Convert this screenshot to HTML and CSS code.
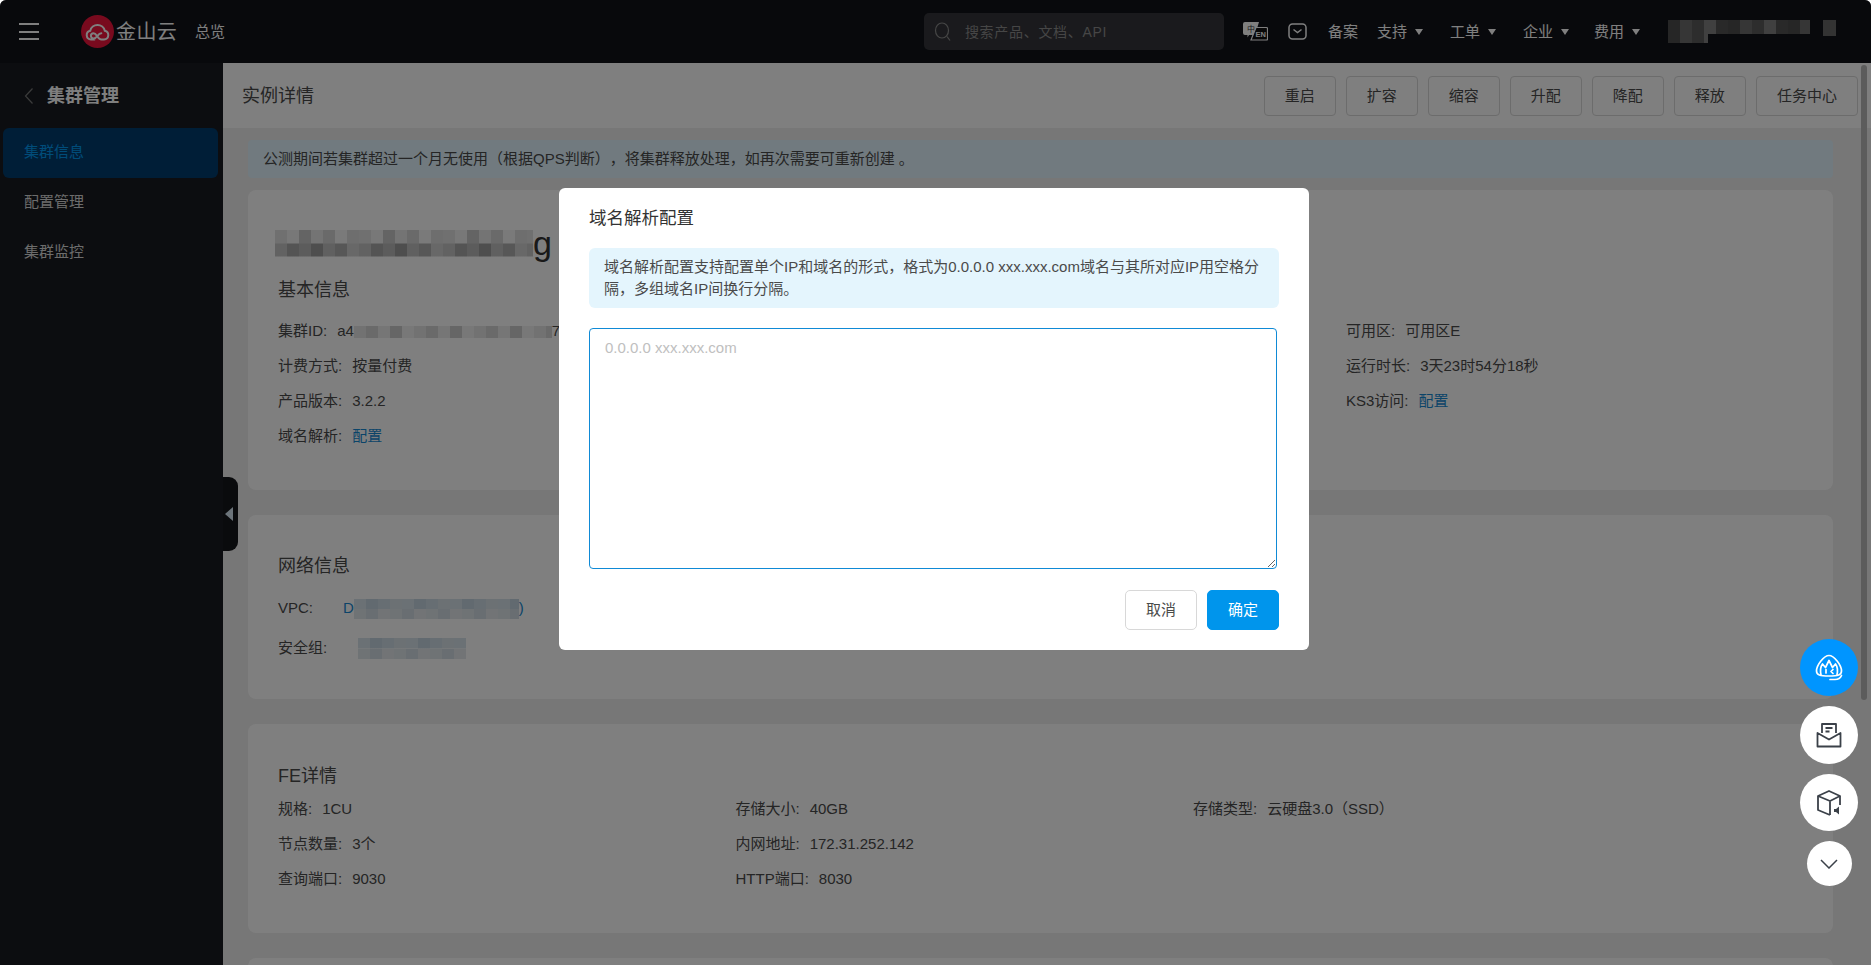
FILE: index.html
```html
<!DOCTYPE html>
<html lang="zh-CN">
<head>
<meta charset="utf-8">
<title>实例详情</title>
<link rel="stylesheet" href="styles.css">
</head>
<body>
<div class="app">
  <header class="topbar">
    <div class="hamburger"><i></i><i></i><i></i></div>
    <svg class="logo-mark" viewBox="0 0 33 33">
      <circle cx="16.5" cy="16.5" r="16.5" fill="#f0143c"/>
      <path d="M13.5 24.5H10a4.4 4.4 0 0 1-.8-8.7a7.5 7.5 0 0 1 14.6 0a4.4 4.4 0 0 1-.8 8.7h-2.5c-2 0-3.2-1.500-4.500-3.500c-1-1.600-2-2.800-3.500-2.800a2.600 2.600 0 0 0 0 5.200c1.800 0 3-1.300 4-2.600c1.300-1.700 2.400-2.600 3.800-2.600" fill="none" stroke="#fff" stroke-width="2" stroke-linecap="round"/>
    </svg>
    <span class="logo-text">金山云</span>
    <span class="overview">总览</span>
    <div class="search">
      <svg class="search-icon" viewBox="0 0 18 20"><ellipse cx="8" cy="8.500" rx="6.500" ry="7.500" fill="none" stroke="#8c8c8c" stroke-width="1.200"/><path d="M13 14.500l3 4" stroke="#8c8c8c" stroke-width="1.200"/></svg>
      <span>搜索产品、文档、API</span>
    </div>
    <svg class="lang-icon" viewBox="0 0 25 19">
      <path d="M2 0h14l-4 13H6l-1.500 2.500V13H2a2 2 0 0 1-2-2V2a2 2 0 0 1 2-2z" fill="#fff"/>
      <text x="4" y="10" class="lang-zh">中</text>
      <path d="M13 5.500h10.500a1 1 0 0 1 1 1V17a1 1 0 0 1-1 1H8z" fill="#111" stroke="#fff" stroke-width="1.200"/>
      <text x="12.500" y="15" class="lang-en">EN</text>
    </svg>
    <svg class="msg-icon" viewBox="0 0 19 17"><rect x="1" y="1" width="17" height="15" rx="3.500" fill="none" stroke="#fff" stroke-width="1.500"/><path d="M5.500 6.500l4 3 4-3" fill="none" stroke="#fff" stroke-width="1.500"/></svg>
    <span class="nav-plain">备案</span>
    <span class="nav-item first">支持<i class="caret"></i></span>
    <span class="nav-item tight">工单<i class="caret"></i></span>
    <span class="nav-item wide">企业<i class="caret"></i></span>
    <span class="nav-item">费用<i class="caret"></i></span>
    <div class="user"><span class="user-name"></span><span class="user-tail"></span></div>
  </header>

  <div class="body-row">
    <aside class="sidebar">
      <div class="side-head">
        <svg class="side-back" viewBox="0 0 10 18"><path d="M8.500 1.500L1.500 9l7 7.500" fill="none" stroke="#777" stroke-width="1.200"/></svg>
        <span>集群管理</span>
      </div>
      <nav class="side-nav">
        <a class="side-link active">集群信息</a>
        <a class="side-link">配置管理</a>
        <a class="side-link">集群监控</a>
      </nav>
      <div class="side-toggle"><i></i></div>
    </aside>

    <main class="main">
      <div class="subhead">
        <h1>实例详情</h1>
        <div class="actions">
          <button class="act">重启</button>
          <button class="act">扩容</button>
          <button class="act">缩容</button>
          <button class="act">升配</button>
          <button class="act">降配</button>
          <button class="act">释放</button>
          <button class="act wide">任务中心</button>
        </div>
      </div>

      <div class="content">
        <div class="notice">公测期间若集群超过一个月无使用（根据QPS判断），将集群释放处理，如再次需要可重新创建 。</div>

        <section class="card card-basic">
          <div class="cluster-name"><span class="mosaic mosaic-title"></span><span class="name-tail">g</span></div>
          <h2>基本信息</h2>
          <div class="grid-basic">
            <div class="row"><b>集群ID:</b><span>a4<span class="mosaic mosaic-id"></span>78</span></div>
            <div class="row"><b>可用区:</b><span>可用区E</span></div>
            <div class="row"><b>计费方式:</b><span>按量付费</span></div>
            <div class="row"><b>运行时长:</b><span>3天23时54分18秒</span></div>
            <div class="row"><b>产品版本:</b><span>3.2.2</span></div>
            <div class="row"><b>KS3访问:</b><a class="link">配置</a></div>
            <div class="row"><b>域名解析:</b><a class="link">配置</a></div>
          </div>
        </section>

        <section class="card card-net">
          <h2>网络信息</h2>
          <div class="net-row net-vpc"><b>VPC:</b><a class="link">D<span class="mosaic mosaic-blue mosaic-vpc"></span>)</a></div>
          <div class="net-row net-sg"><b>安全组:</b><a class="link"><span class="mosaic mosaic-blue mosaic-sg"></span></a></div>
        </section>

        <section class="card card-fe">
          <h2>FE详情</h2>
          <div class="grid-fe">
            <div class="row"><b>规格:</b><span>1CU</span></div>
            <div class="row"><b>存储大小:</b><span>40GB</span></div>
            <div class="row"><b>存储类型:</b><span>云硬盘3.0（SSD）</span></div>
            <div class="row"><b>节点数量:</b><span>3个</span></div>
            <div class="row"><b>内网地址:</b><span>172.31.252.142</span></div>
            <div class="row"></div>
            <div class="row"><b>查询端口:</b><span>9030</span></div>
            <div class="row"><b>HTTP端口:</b><span>8030</span></div>
          </div>
        </section>

        <section class="card card-next"></section>
      </div>
    </main>
  </div>

  <div class="scroll-thumb"></div>

  <div class="overlay">
    <div class="modal">
      <div class="modal-title">域名解析配置</div>
      <div class="modal-alert">域名解析配置支持配置单个IP和域名的形式，格式为0.0.0.0 xxx.xxx.com域名与其所对应IP用空格分隔，多组域名IP间换行分隔。</div>
      <textarea class="modal-input" placeholder="0.0.0.0 xxx.xxx.com"></textarea>
      <div class="modal-foot">
        <button class="btn">取消</button>
        <button class="btn primary">确定</button>
      </div>
    </div>
  </div>

  <div class="float-tools">
    <button class="tool blue">
      <svg viewBox="0 0 28 28" width="28" height="28" fill="none" stroke="#fff" stroke-width="1.700" stroke-linecap="round" stroke-linejoin="round">
        <path d="M1.500 17C1.500 11 9 1.500 14 1.500S26.500 11 26.500 17c0 4-3.500 5-12.500 5S1.500 21 1.500 17z"/>
        <path d="M6 21c-1-5 0-9 1.500-11l3 3.500L14 6.500l3.500 7 3-3.500c1.500 2 2.500 6 1.500 11"/>
        <path d="M11 15.500v3.500M18 15.500l-2 2 2 2"/>
        <path d="M15 25.500h5c3 0 5.500-1.500 6.500-4"/>
      </svg>
    </button>
    <button class="tool">
      <svg viewBox="0 0 26 26" width="26" height="26" fill="none" stroke="#3b4149" stroke-width="1.800" stroke-linejoin="round">
        <path d="M6 11V2h14v9"/>
        <path d="M9.500 6h7M9.500 9.500h4"/>
        <path d="M1.500 11L13 17.500 24.500 11v13.500h-23z"/>
      </svg>
    </button>
    <button class="tool mid">
      <svg viewBox="0 0 26 28" width="26" height="28" fill="none" stroke="#3b4149" stroke-width="1.800" stroke-linejoin="round">
        <path d="M14 26L2 21V7l11-5 11 5v9"/>
        <path d="M2 7l12 5 10-5M14 12v14"/>
        <path d="M18 20h2l3-2.500v8L20 23h-2z" fill="#3b4149" stroke="none"/>
      </svg>
    </button>
    <button class="tool small">
      <svg viewBox="0 0 18 10" width="18" height="10" fill="none" stroke="#3b4149" stroke-width="1.500"><path d="M1 1l8 8 8-8"/></svg>
    </button>
  </div>
</div>
</body>
</html>
```

FILE: styles.css
```css
* { box-sizing: border-box; }
html, body { margin: 0; height: 100%; background: #fff; overflow: hidden; }
body { font: 15px/22px "Liberation Sans", "Noto Sans CJK SC", sans-serif; color: #4a4a4a; }
h1, h2 { margin: 0; font-weight: 400; }
button { font: inherit; cursor: pointer; }

.app {
  position: relative;
  width: 1871px;
  height: 965px;
  overflow: hidden;
  border-radius: 6px 6px 0 0;
  background: #eee;
}

/* top bar */
.topbar {
  display: flex;
  align-items: center;
  height: 63px;
  padding: 0 35px 0 19px;
  background: #101218;
  color: #fff;
}
.hamburger { display: flex; flex-direction: column; justify-content: space-between; width: 20px; height: 17px; }
.hamburger i { display: block; height: 2px; background: #fff; }
.logo-mark { width: 33px; height: 33px; margin-left: 42px; flex: none; }
.logo-text { margin-left: 2px; width: 61px; font-size: 20px; letter-spacing: .4px; white-space: nowrap; }
.overview { margin-left: 18px; }
.search {
  display: flex;
  align-items: center;
  gap: 13px;
  width: 300px;
  height: 37px;
  margin-left: auto;
  padding-left: 10px;
  border-radius: 5px;
  background: #34353a;
  color: #8c8c8c;
  font-size: 14px;
  letter-spacing: .7px;
}
.search-icon { width: 18px; height: 20px; flex: none; }
.lang-icon { width: 25px; height: 19px; margin-left: 19px; flex: none; }
.lang-zh { font-size: 8px; fill: #333; }
.lang-en { font-size: 7.500px; fill: #fff; font-weight: 700; }
.msg-icon { width: 19px; height: 17px; margin-left: 20px; flex: none; }
.nav-plain { margin-left: 21px; }
.nav-item { display: flex; align-items: center; margin-left: 25px; }
.nav-item.first { margin-left: 19px; }
.nav-item.tight { margin-left: 27px; }
.nav-item.wide { margin-left: 27px; }
.caret {
  width: 0;
  height: 0;
  margin-left: 8px;
  border-left: 4.500px solid transparent;
  border-right: 4.500px solid transparent;
  border-top: 6px solid #fff;
}
.user { display: flex; align-items: flex-start; gap: 13px; margin-left: 28px; height: 23px; }
.user-name {
  width: 142px;
  height: 23px;
  background:
    linear-gradient(#101218, #101218) 40px 100% / 100% 9px no-repeat,
    repeating-linear-gradient(90deg, #4c4c4c 0 12px, #6c6c6c 12px 24px, #5a5a5a 24px 36px, #808080 36px 48px, #525252 48px 60px);
}
.user-tail { width: 13px; height: 16px; background: #666; }

/* body */
.body-row { display: flex; height: 902px; }
.sidebar { position: relative; flex: none; width: 223px; background: #191b20; color: #d8d8d8; }
.side-head { display: flex; align-items: center; height: 65px; padding-left: 24px; font-size: 18px; font-weight: 700; color: #fff; }
.side-back { width: 10px; height: 18px; margin-right: 13px; }
.side-nav { display: flex; flex-direction: column; padding: 0 5px 0 3px; }
.side-link { display: flex; align-items: center; height: 50px; padding: 0 0 2px 21px; border-radius: 6px; }
.side-link.active { background: #003c6e; color: #0099f2; }
.side-toggle {
  position: absolute;
  left: 223px;
  top: 414px;
  display: flex;
  align-items: center;
  width: 15px;
  height: 74px;
  border-radius: 0 9px 9px 0;
  background: #15161a;
}
.side-toggle i {
  margin-left: 2px;
  border-top: 7px solid transparent;
  border-bottom: 7px solid transparent;
  border-right: 8px solid #d8e8f5;
}

.main { flex: 1; min-width: 0; }
.subhead {
  display: flex;
  align-items: center;
  justify-content: space-between;
  height: 65px;
  padding: 0 13px 0 19px;
  background: #fefefe;
}
.subhead h1 { font-size: 18px; color: #4a4a4a; }
.actions { display: flex; gap: 10.500px; }
.act {
  width: 71.500px;
  height: 40px;
  padding: 0;
  border: 1px solid #d8d8d8;
  border-radius: 4px;
  background: transparent;
  color: #4a4a4a;
}
.act.wide { width: 102px; }

.content { display: flex; flex-direction: column; padding: 12px 38px 0 25px; }
.notice {
  height: 38px;
  padding: 8px 15px;
  border-radius: 4px;
  background: #e2f5ff;
  text-spacing-trim: space-all;
}
.card { margin-top: 25px; padding: 0 30px; border-radius: 8px; background: #fff; }
.notice + .card { margin-top: 12px; }
.card h2 { font-size: 18px; line-height: 26px; color: #4a4a4a; }
.card-basic { height: 300px; padding-top: 30px; }
.card-net { height: 184px; padding-top: 38px; }
.card-fe { height: 209px; padding-top: 39px; }
.card-next { height: 60px; }

.cluster-name { display: flex; align-items: center; height: 46px; margin-left: -3px; }
.name-tail { font-size: 34px; line-height: 46px; color: #333; }
.card-basic h2 { margin-top: 11px; }
.grid-basic { display: grid; grid-template-columns: 1068px 1fr; margin-top: 10px; }
.grid-fe { display: grid; grid-template-columns: repeat(3, 457.500px); margin-top: 2px; }
.row { display: flex; align-items: center; height: 35px; white-space: nowrap; }
.row b, .net-row b { font-weight: 400; }
.row b { margin-right: 10px; }
.link { color: #1689d2; }

.net-row { display: flex; align-items: center; height: 40px; }
.net-vpc { margin-top: 9px; }
.net-vpc b { width: 65px; }
.net-sg b { width: 80px; }

.mosaic { display: inline-block; vertical-align: middle; }
.mosaic-title {
  width: 258px;
  height: 27px;
  background:
    repeating-linear-gradient(90deg, #e0e0e0 0 12px, #f0f0f0 12px 24px, #c8c8c8 24px 36px, #e8e8e8 36px 48px, #d4d4d4 48px 60px, #f4f4f4 60px 72px, #ddd 72px 84px) 0 0 / 100% 50% no-repeat,
    repeating-linear-gradient(90deg, #c4c4c4 0 12px, #a8a8a8 12px 24px, #b8b8b8 24px 36px, #9c9c9c 36px 48px, #c0c0c0 48px 60px, #aeaeae 60px 72px, #d0d0d0 72px 84px) 0 100% / 100% 50% no-repeat;
}
.mosaic-id {
  width: 198px;
  height: 12px;
  background: repeating-linear-gradient(90deg, #e4e4e4 0 12px, #d4d4d4 12px 24px, #ececec 24px 36px, #cdcdcd 36px 48px, #f0f0f0 48px 60px);
}
.mosaic-blue {
  background:
    repeating-linear-gradient(90deg, #d6e2ea 0 12px, #c4d4e0 12px 24px, #cfdde6 24px 36px, #d8e2e8 36px 48px) 0 0 / 100% 50% no-repeat,
    repeating-linear-gradient(90deg, #dfe6ea 0 12px, #d2dde4 12px 24px, #e4e9ec 24px 36px) 0 100% / 100% 50% no-repeat;
}
.mosaic-vpc { width: 165px; height: 20px; }
.mosaic-sg { width: 108px; height: 21px; }

.scroll-thumb {
  position: absolute;
  top: 65px;
  left: 1861px;
  width: 6px;
  height: 635px;
  border-radius: 3px;
  background: #b8b8b8;
}

/* dialog */
.overlay { position: absolute; inset: 0; background: rgba(0, 0, 0, .5); }
.modal {
  width: 750px;
  height: 462px;
  margin: 188px 0 0 559px;
  padding: 17px 30px 20px;
  border-radius: 6px;
  background: #fff;
  color: #4a4a4a;
}
.modal-title { font-size: 17.500px; line-height: 26px; color: #333; }
.modal-alert {
  height: 60px;
  margin-top: 17px;
  padding: 8px 15px;
  border-radius: 6px;
  background: #e4f5fd;
}
.modal-input {
  display: block;
  width: 688px;
  height: 241px;
  margin-top: 20px;
  padding: 8px 15px;
  border: 1px solid #0f8ad6;
  border-radius: 4px;
  outline: none;
  font: inherit;
}
.modal-input::placeholder { color: #c0c0c0; opacity: 1; }
.modal-foot { display: flex; justify-content: flex-end; gap: 10px; margin-top: 21px; }
.btn { width: 72px; height: 40px; padding: 0; border: 1px solid #d8d8d8; border-radius: 5px; background: #fff; color: #4a4a4a; }
.btn.primary { border-color: #0095ec; background: #0095ec; color: #fff; }

/* floating tools */
.float-tools {
  position: absolute;
  top: 639px;
  right: 13px;
  display: flex;
  flex-direction: column;
  align-items: center;
  gap: 10px;
}
.tool {
  display: flex;
  align-items: center;
  justify-content: center;
  width: 58px;
  height: 58px;
  padding: 0;
  border: 0;
  border-radius: 50%;
  background: #fff;
}
.tool.blue { background: #0095ff; height: 57px; }
.tool.mid { height: 57px; }
.tool.small { width: 45px; height: 45px; }
```
